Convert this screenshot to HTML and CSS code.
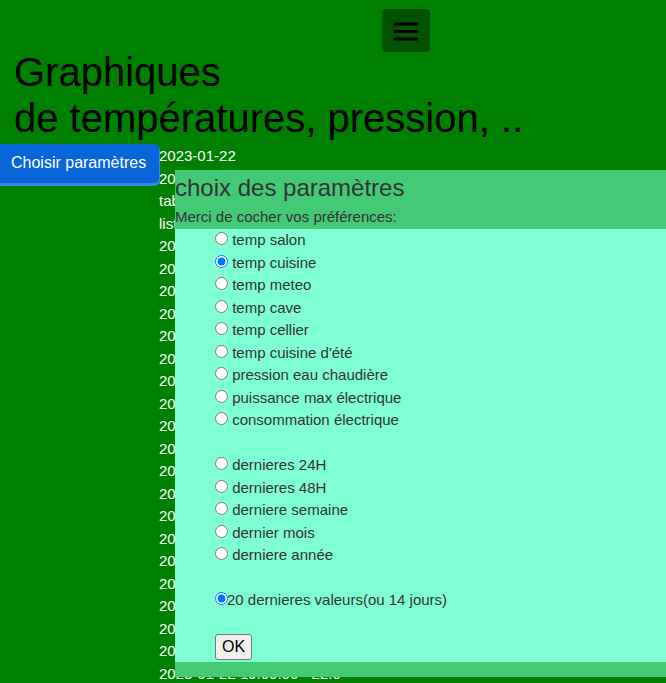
FILE: index.html
```html
<!DOCTYPE html>
<html lang="fr">
<head>
<meta charset="utf-8">
<title>Graphiques</title>
<link rel="stylesheet" href="styles.css">
</head>
<body>
<nav class="topbar">
  <button class="menu-btn" type="button" aria-label="menu">
    <svg width="26" height="20" viewBox="0 0 26 20"><path d="M2 3h22M2 10.5h22M2 18h22" stroke="#000" stroke-width="3" stroke-linecap="round" fill="none"/></svg>
  </button>
</nav>
<h1 class="title">Graphiques<br>de températures, pression, ..</h1>
<div class="main">
  <button class="choose-btn" type="button">Choisir paramètres</button>
  <div class="data">
    <div class="row">2023-01-22</div>
    <div class="row">2023-01-22 temp cuisine</div>
    <div class="row">tableau des valeurs</div>
    <div class="row">liste des mesures</div>
    <div class="row">2023-01-22 00:00:00 - 19.5</div>
    <div class="row">2023-01-22 01:00:00 - 19.4</div>
    <div class="row">2023-01-22 02:00:00 - 19.3</div>
    <div class="row">2023-01-22 03:00:00 - 19.2</div>
    <div class="row">2023-01-22 04:00:00 - 19.1</div>
    <div class="row">2023-01-22 05:00:00 - 19.0</div>
    <div class="row">2023-01-22 06:00:00 - 18.9</div>
    <div class="row">2023-01-22 07:00:00 - 19.2</div>
    <div class="row">2023-01-22 08:00:00 - 20.1</div>
    <div class="row">2023-01-22 09:00:00 - 21.0</div>
    <div class="row">2023-01-22 10:00:00 - 21.6</div>
    <div class="row">2023-01-22 11:00:00 - 22.3</div>
    <div class="row">2023-01-22 12:00:00 - 23.0</div>
    <div class="row">2023-01-22 13:00:00 - 23.8</div>
    <div class="row">2023-01-22 14:00:00 - 24.6</div>
    <div class="row">2023-01-22 15:00:00 - 24.1</div>
    <div class="row">2023-01-22 16:00:00 - 23.5</div>
    <div class="row">2023-01-22 17:00:00 - 22.9</div>
    <div class="row">2023-01-22 18:00:00 - 22.4</div>
    <div class="row">2023-01-22 19:00:00 - 22.0</div>
    <div class="row">2023-01-22 20:00:00 - 21.7</div>
  </div>
</div>
<div class="modal">
  <div class="modal-header">
    <h2 class="modal-title">choix des paramètres</h2>
    <p class="modal-sub">Merci de cocher vos préférences:</p>
  </div>
  <form class="modal-body">
    <label class="opt"><input type="radio" name="capteur"> temp salon</label>
    <label class="opt"><input type="radio" name="capteur" checked> temp cuisine</label>
    <label class="opt"><input type="radio" name="capteur"> temp meteo</label>
    <label class="opt"><input type="radio" name="capteur"> temp cave</label>
    <label class="opt"><input type="radio" name="capteur"> temp cellier</label>
    <label class="opt"><input type="radio" name="capteur"> temp cuisine d'été</label>
    <label class="opt"><input type="radio" name="capteur"> pression eau chaudière</label>
    <label class="opt"><input type="radio" name="capteur"> puissance max électrique</label>
    <label class="opt"><input type="radio" name="capteur"> consommation électrique</label>
    <div class="gap"></div>
    <label class="opt"><input type="radio" name="periode"> dernieres 24H</label>
    <label class="opt"><input type="radio" name="periode"> dernieres 48H</label>
    <label class="opt"><input type="radio" name="periode"> derniere semaine</label>
    <label class="opt"><input type="radio" name="periode"> dernier mois</label>
    <label class="opt"><input type="radio" name="periode"> derniere année</label>
    <div class="gap"></div>
    <label class="opt"><input class="tight" type="radio" name="periode" checked>20 dernieres valeurs(ou 14 jours)</label>
    <div class="gap"></div>
    <button class="ok-btn" type="button">OK</button>
  </form>
  <div class="modal-footer"></div>
</div>
</body>
</html>
```

FILE: styles.css
```css
html, body {
  margin: 0;
  padding: 0;
}
body {
  background: #008000;
  font-family: "Liberation Sans", Arial, sans-serif;
  font-size: 15px;
  line-height: 1.5;
  color: #000;
  height: 683px;
  overflow: hidden;
  position: relative;
}
.topbar {
  height: 49px;
  box-sizing: border-box;
  padding: 9px 0 0 382px;
  display: flex;
  align-items: flex-start;
}
.menu-btn {
  width: 48px;
  height: 43px;
  border: none;
  border-radius: 4px;
  background: #005200;
  display: flex;
  align-items: center;
  justify-content: center;
  padding: 0;
  flex-shrink: 0;
}
.title {
  margin: 0;
  padding-left: 14px;
  font-size: 40px;
  font-weight: normal;
  line-height: 46px;
  color: #000;
}
.main {
  margin-top: 3px;
  display: flex;
  align-items: flex-start;
}
.choose-btn {
  flex-shrink: 0;
  font-family: "Liberation Sans", Arial, sans-serif;
  font-size: 16px;
  line-height: 18px;
  color: #fff;
  background: #0966d8;
  border: none;
  border-radius: 0 5px 5px 0;
  padding: 10px 11px 11px;
  box-shadow: 0 2px 0 1px #3a8ae0;
  width: 159px;
  text-align: left;
}
.data {
  color: #fff;
  white-space: nowrap;
  margin-top: 1px;
}
.row {
  height: 22.5px;
}
.modal {
  position: absolute;
  left: 175px;
  top: 170px;
  right: 0;
  height: 507px;
  background: #7fffd4;
  display: flex;
  flex-direction: column;
  color: #333;
}
.modal-header {
  background: #44c977;
  height: 59px;
}
.modal-title {
  margin: 0;
  font-size: 24px;
  font-weight: normal;
  line-height: 36px;
}
.modal-sub {
  margin: 0;
  font-size: 15px;
  line-height: 22.5px;
}
.modal-body {
  flex: 1;
  padding-left: 35px;
  margin: 0;
}
.opt {
  display: block;
  height: 22.5px;
  line-height: 22.5px;
  white-space: nowrap;
}
.opt input {
  margin: 3px 0 0 5px;
}
.opt input.tight {
  margin-right: -1px;
}
.gap {
  height: 22.5px;
}
.ok-btn {
  margin-left: 5px;
  font-family: "Liberation Sans", Arial, sans-serif;
  font-size: 16px;
  line-height: 20px;
  padding: 2px 6px;
  border: 1px solid #767676;
  border-radius: 3px;
  background: #efefef;
  color: #000;
  display: block;
}
.modal-footer {
  height: 15px;
  background: #44c977;
}
```
